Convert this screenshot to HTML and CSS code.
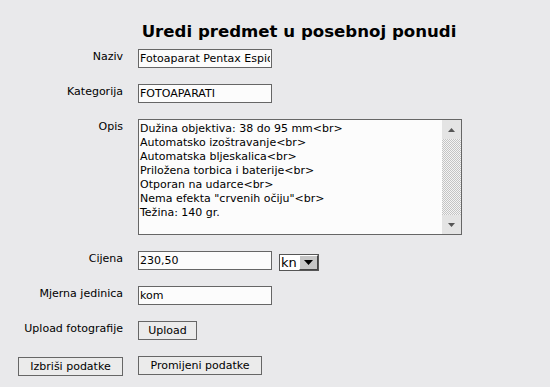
FILE: index.html
```html
<!doctype html>
<html lang="hr">
<head>
    <meta charset="UTF-8">
    <title>Uredi predmet u posebnoj ponudi</title>
<link rel="stylesheet" href="styles.css">
</head>
<body>
<h1 class="title">Uredi predmet u posebnoj ponudi</h1>

<form class="edit-form">
<label class="lbl" for="naziv">Naziv</label>
<div class="field"><input class="txt" type="text" id="naziv" value="Fotoaparat Pentax Espio"></div>

<label class="lbl" for="kategorija">Kategorija</label>
<div class="field"><input class="txt" type="text" id="kategorija" value="FOTOAPARATI"></div>

<label class="lbl" for="opis">Opis</label>
<div class="field">
<div class="area">
<textarea id="opis" class="area-text">Dužina objektiva: 38 do 95 mm&lt;br&gt;
Automatsko izoštravanje&lt;br&gt;
Automatska bljeskalica&lt;br&gt;
Priložena torbica i baterije&lt;br&gt;
Otporan na udarce&lt;br&gt;
Nema efekta "crvenih očiju"&lt;br&gt;
Težina: 140 gr.</textarea>
<div class="scrollbar">
<div class="sb-btn"><svg width="7" height="4" viewBox="0 0 7 4"><polygon points="0,4 7,4 3.5,0" fill="#555"/></svg></div>
<div class="sb-track"></div>
<div class="sb-btn"><svg width="7" height="4" viewBox="0 0 7 4"><polygon points="0,0 7,0 3.5,4" fill="#555"/></svg></div>
</div>
</div>
</div>

<label class="lbl" for="cijena">Cijena</label>
<div class="field field-row">
<input class="txt" type="text" id="cijena" value="230,50">
<div class="select">
<span class="select-val">kn</span>
<span class="select-btn"><svg width="9" height="5" viewBox="0 0 9 5"><polygon points="0,0 9,0 4.5,5" fill="#000"/></svg></span>
</div>
</div>

<label class="lbl" for="jedinica">Mjerna jedinica</label>
<div class="field"><input class="txt" type="text" id="jedinica" value="kom"></div>

<span class="lbl">Upload fotografije</span>
<div class="field"><button type="button" class="btn btn-upload">Upload</button></div>

<div class="lbl"><button type="button" class="btn btn-del">Izbriši podatke</button></div>
<div class="field"><button type="submit" class="btn btn-save">Promijeni podatke</button></div>
</form>
</body>
</html>
```

FILE: styles.css
```css
body {
    background-color: #e9e9eb;
    margin: 8px;
    font-family: "DejaVu Sans", Verdana, sans-serif;
    font-size: 11px;
    color: #000;
}
.title {
    margin: 13px 0 0 0;
    padding-left: 48px;
    font-size: 16.6px;
    line-height: 22px;
    text-align: center;
}
.edit-form {
    display: grid;
    grid-template-columns: 115px 1fr;
    column-gap: 15px;
    row-gap: 16px;
    margin-top: 6px;
}
.lbl {
    text-align: right;
    line-height: 13px;
    padding-top: 1px;
}
.field {
    display: flex;
}
.field-row {
    align-items: flex-end;
    gap: 7px;
}
.txt {
    box-sizing: border-box;
    width: 134px;
    height: 19px;
    margin: 0;
    padding: 0 1px;
    border: 1px solid #666;
    background: #fcfcfc;
    font-family: inherit;
    font-size: 11px;
    color: #000;
    outline: none;
}
.area {
    display: flex;
    box-sizing: border-box;
    width: 324px;
    height: 116px;
    border: 1px solid #666;
    background: #fcfcfc;
}
.area-text {
    flex: 1;
    margin: 0;
    padding: 2px 1px;
    border: none;
    background: transparent;
    font-family: inherit;
    font-size: 11px;
    line-height: 14px;
    color: #000;
    resize: none;
    overflow: hidden;
    outline: none;
}
.scrollbar {
    width: 19px;
    display: flex;
    flex-direction: column;
}
.sb-btn {
    height: 19px;
    background: #e4e4e4;
    display: flex;
    align-items: center;
    justify-content: center;
}
.sb-track {
    flex: 1;
    background: repeating-conic-gradient(#c4c4c4 0 25%, #f4f4f4 0 50%) 0 0 / 2px 2px;
}
.select {
    display: flex;
    height: 17px;
    box-sizing: border-box;
    border: 1px solid #555;
    margin-bottom: -1px;
    background: #fff;
}
.select-val {
    width: 18px;
    padding-left: 1px;
    font-size: 13px;
    line-height: 15px;
}
.select-btn {
    box-sizing: border-box;
    width: 19px;
    background: #c6c6c6;
    border-top: 1px solid #fff;
    border-left: 1px solid #fff;
    border-right: 1px solid #444;
    border-bottom: 1px solid #444;
    display: flex;
    align-items: center;
    justify-content: center;
}
.btn {
    box-sizing: border-box;
    height: 19px;
    margin: 0;
    padding: 0 8px;
    border: 1px solid #666;
    background: #ebebeb;
    font-family: inherit;
    font-size: 11px;
    color: #000;
    cursor: pointer;
}
.btn-upload {
    width: 59px;
}
.btn-del {
    width: 105px;
    padding: 0;
}
.btn-save {
    width: 124px;
    padding: 0;
}
```
